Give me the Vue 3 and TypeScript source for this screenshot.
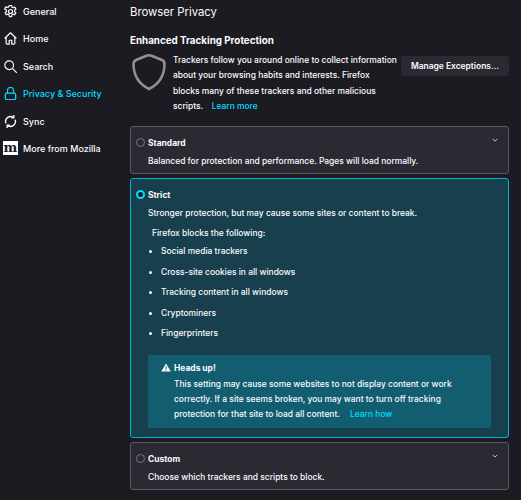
<template>
  <div class="page">
    <nav class="sidebar">
      <a v-for="item in navItems" :key="item.label" class="navItem" :class="{ active: item.active }">
        <svg v-if="item.icon === 'gear'" class="navIcon" viewBox="0.5 0.5 15 15" fill="none" stroke="currentColor" stroke-width="1.4" stroke-linejoin="round">
          <path d="M6.700 1h2.600l.4 2 1.300.7 1.900-.7 1.300 2.300-1.500 1.300v1.600l1.500 1.300-1.300 2.300-1.900-.7-1.300.7-.4 2H6.700l-.4-2-1.300-.7-1.900.7-1.300-2.300 1.500-1.300V6.300L1.300 5l1.300-2.300 1.900.7 1.300-.7z" />
          <circle cx="8" cy="8" r="2.300" />
        </svg>
        <svg v-else-if="item.icon === 'home'" class="navIcon" viewBox="0.5 0.5 15 15" fill="none" stroke="currentColor" stroke-width="1.400" stroke-linejoin="round">
          <path d="M1.200 8 8 1.400 14.800 8M3 6.800V13.500a1 1 0 0 0 1 1h2.500V10h3v4.500H12a1 1 0 0 0 1-1V6.800" />
        </svg>
        <svg v-else-if="item.icon === 'search'" class="navIcon" viewBox="0.5 0.5 15 15" fill="none" stroke="currentColor" stroke-width="1.400" stroke-linecap="round">
          <circle cx="6.500" cy="6.500" r="5" />
          <path d="m10.200 10.200 5 5" />
        </svg>
        <svg v-else-if="item.icon === 'lock'" class="navIcon" viewBox="0.5 0.5 15 15" fill="none" stroke="currentColor" stroke-width="1.400" stroke-linejoin="round">
          <path d="M4.500 7.500V4.500a3.500 3.500 0 0 1 7 0v3" />
          <rect x="2" y="7.500" width="12" height="7.500" rx="1.800" />
        </svg>
        <svg v-else-if="item.icon === 'sync'" class="navIcon" viewBox="0.5 0.5 15 15" fill="none" stroke="currentColor" stroke-width="1.600" stroke-linecap="round" stroke-linejoin="round">
          <path d="M2.500 9.500A5.700 5.700 0 0 1 11.500 3.500M13.500 6.500A5.700 5.700 0 0 1 4.500 12.500" />
          <path d="M11.800 1.200v2.600H9.200M4.200 14.800v-2.600h2.600" />
        </svg>
        <span v-else class="mozIcon">m</span>
        <span>{{ item.label }}</span>
      </a>
    </nav>

    <main class="content">
      <h1 class="pageTitle">Browser Privacy</h1>
      <h2 class="sectionTitle">Enhanced Tracking Protection</h2>

      <div class="intro">
        <svg class="shield" viewBox="0 0 34 38" fill="none" stroke="#8f8f94" stroke-width="2.600" stroke-linejoin="round">
          <path d="M14.500 2.800Q17 1.800 19.500 2.800L30 7Q32.500 8 32.500 11C32.500 22 27 31 17 36 7 31 1.500 22 1.500 11 1.500 9 2 8 4 7z" />
        </svg>
        <p class="introText">
          Trackers follow you around online to collect information about your browsing habits and interests. Firefox blocks many of these trackers and other malicious scripts.
          <a class="link learnMore">Learn more</a>
        </p>
        <button class="manageBtn">Manage Exceptions...</button>
      </div>

      <section class="card">
        <div class="cardHead">
          <span class="radio"></span>
          <span class="cardTitle">Standard</span>
          <svg class="chevron" viewBox="0 0 8 5" fill="none" stroke="currentColor" stroke-width="1"><path d="m1 1 3 3 3-3" /></svg>
        </div>
        <p class="cardDesc">Balanced for protection and performance. Pages will load normally.</p>
      </section>

      <section class="card selected">
        <div class="cardHead">
          <span class="radio on"></span>
          <span class="cardTitle">Strict</span>
        </div>
        <p class="cardDesc">Stronger protection, but may cause some sites or content to break.</p>
        <p class="blocksLabel">Firefox blocks the following:</p>
        <ul class="blockList">
          <li v-for="b in blocked" :key="b">{{ b }}</li>
        </ul>
        <div class="warning">
          <div class="warningHead">
            <svg class="warnIcon" viewBox="0 0 12 11"><path fill="#fff" fill-rule="evenodd" d="M6 .500 11.800 10.500H.200zM5.400 4v3.500h1.200V4zm0 4.300v1.200h1.200V8.300z" /></svg>
            <strong>Heads up!</strong>
          </div>
          <p class="warningText">
            This setting may cause some websites to not display content or work correctly. If a site seems broken, you may want to turn off tracking protection for that site to load all content.
            <a class="link learnHow">Learn how</a>
          </p>
        </div>
      </section>

      <section class="card">
        <div class="cardHead">
          <span class="radio"></span>
          <span class="cardTitle">Custom</span>
          <svg class="chevron" viewBox="0 0 8 5" fill="none" stroke="currentColor" stroke-width="1"><path d="m1 1 3 3 3-3" /></svg>
        </div>
        <p class="cardDesc">Choose which trackers and scripts to block.</p>
      </section>
    </main>
  </div>
</template>

<script setup lang="ts">
const navItems = [
  { label: 'General', icon: 'gear' },
  { label: 'Home', icon: 'home' },
  { label: 'Search', icon: 'search' },
  { label: 'Privacy & Security', icon: 'lock', active: true },
  { label: 'Sync', icon: 'sync' },
  { label: 'More from Mozilla', icon: 'moz' },
]

const blocked = [
  'Social media trackers',
  'Cross-site cookies in all windows',
  'Tracking content in all windows',
  'Cryptominers',
  'Fingerprinters',
]
</script>

<style>
html, body {
  margin: 0;
  background: #1c1b22;
}
</style>

<style scoped>
.page {
  display: flex;
  width: 521px;
  height: 500px;
  overflow: hidden;
  background: #1c1b22;
  color: #fbfbfe;
  font-family: Inter, "Liberation Sans", sans-serif;
  font-size: 8.450px;
  font-weight: 500;
}

.sidebar {
  width: 130px;
  flex-shrink: 0;
  display: flex;
  flex-direction: column;
  gap: 7.400px;
  padding: 1.500px 0 0 4px;
  box-sizing: border-box;
}

.navItem {
  display: flex;
  align-items: center;
  gap: 6px;
  height: 20px;
  font-size: 9px;
  font-weight: 500;
  white-space: nowrap;
}

.navItem.active {
  color: #00ddff;
}

.navIcon {
  width: 13px;
  height: 13px;
  flex-shrink: 0;
}

.mozIcon {
  width: 15px;
  height: 14px;
  margin-left: -1px;
  margin-right: -1px;
  overflow: hidden;
  background: #fff;
  color: #1c1b22;
  font-family: "DejaVu Serif", serif;
  font-weight: 700;
  font-size: 13px;
  line-height: 14px;
  text-align: center;
  flex-shrink: 0;
}

.content {
  flex: 1;
  min-width: 0;
  padding-right: 12px;
}

.pageTitle {
  margin: 4px 0 0;
  font-size: 11.300px;
  line-height: 17px;
  font-weight: 400;
}

.sectionTitle {
  margin: 13px 0 0;
  font-size: 9.800px;
  line-height: 14px;
  font-weight: 700;
}

.intro {
  display: flex;
  align-items: flex-start;
  height: 78px;
}

.shield {
  width: 34px;
  height: 38px;
  margin: 5px 7px 0 2px;
  flex-shrink: 0;
}

.introText {
  width: 224px;
  margin: 0;
  line-height: 15.400px;
  padding-top: 5px;
}

.learnMore {
  margin-left: 6.500px;
}

.link {
  color: #00ddff;
  font-weight: 500;
}

.manageBtn {
  margin-left: auto;
  width: 108px;
  height: 20px;
  margin-top: 8px;
  padding: 0;
  border: none;
  border-radius: 3px;
  background: #2b2a33;
  color: #fbfbfe;
  font: inherit;
  font-weight: 600;
}

.card {
  box-sizing: border-box;
  padding: 8px 9px 0 17px;
  margin-bottom: 4px;
  height: 48px;
  border: 1px solid #5a5a60;
  border-radius: 3px;
  background: #2b2a33;
}

.card.selected {
  height: 260px;
  border-color: #00b3d6;
  background: #173f4d;
}

.cardHead {
  position: relative;
  display: flex;
  align-items: center;
  height: 16px;
}

.radio {
  position: absolute;
  left: -12px;
  top: 3px;
  width: 9px;
  height: 9px;
  box-sizing: border-box;
  border: 1px solid #77767c;
  border-radius: 50%;
}

.radio.on {
  border: 2.500px solid #00ddff;
  background: #1c1b22;
}

.cardTitle {
  font-weight: 700;
}

.chevron {
  position: absolute;
  right: 1px;
  top: 3px;
  width: 6px;
  height: 4px;
}

.cardDesc {
  margin: 2px 0 0;
  line-height: 16px;
}

.blocksLabel {
  margin: 5px 0 0 4px;
  line-height: 15px;
}

.blockList {
  margin: 0;
  padding: 0 0 0 13px;
  list-style: disc outside;
}

.blockList li {
  height: 20.500px;
  line-height: 20.500px;
}

.warning {
  margin: 11px 8px 0 0;
  padding: 6px 10px 0 26px;
  height: 73px;
  box-sizing: border-box;
  border-radius: 2px;
  background: #125e70;
}

.warningHead {
  position: relative;
  line-height: 14px;
}

.warnIcon {
  position: absolute;
  left: -13px;
  top: 2px;
  width: 10px;
  height: 9px;
}

.warningText {
  margin: 2px 0 0;
  line-height: 15.400px;
}

.learnHow {
  margin-left: 8px;
}
</style>
